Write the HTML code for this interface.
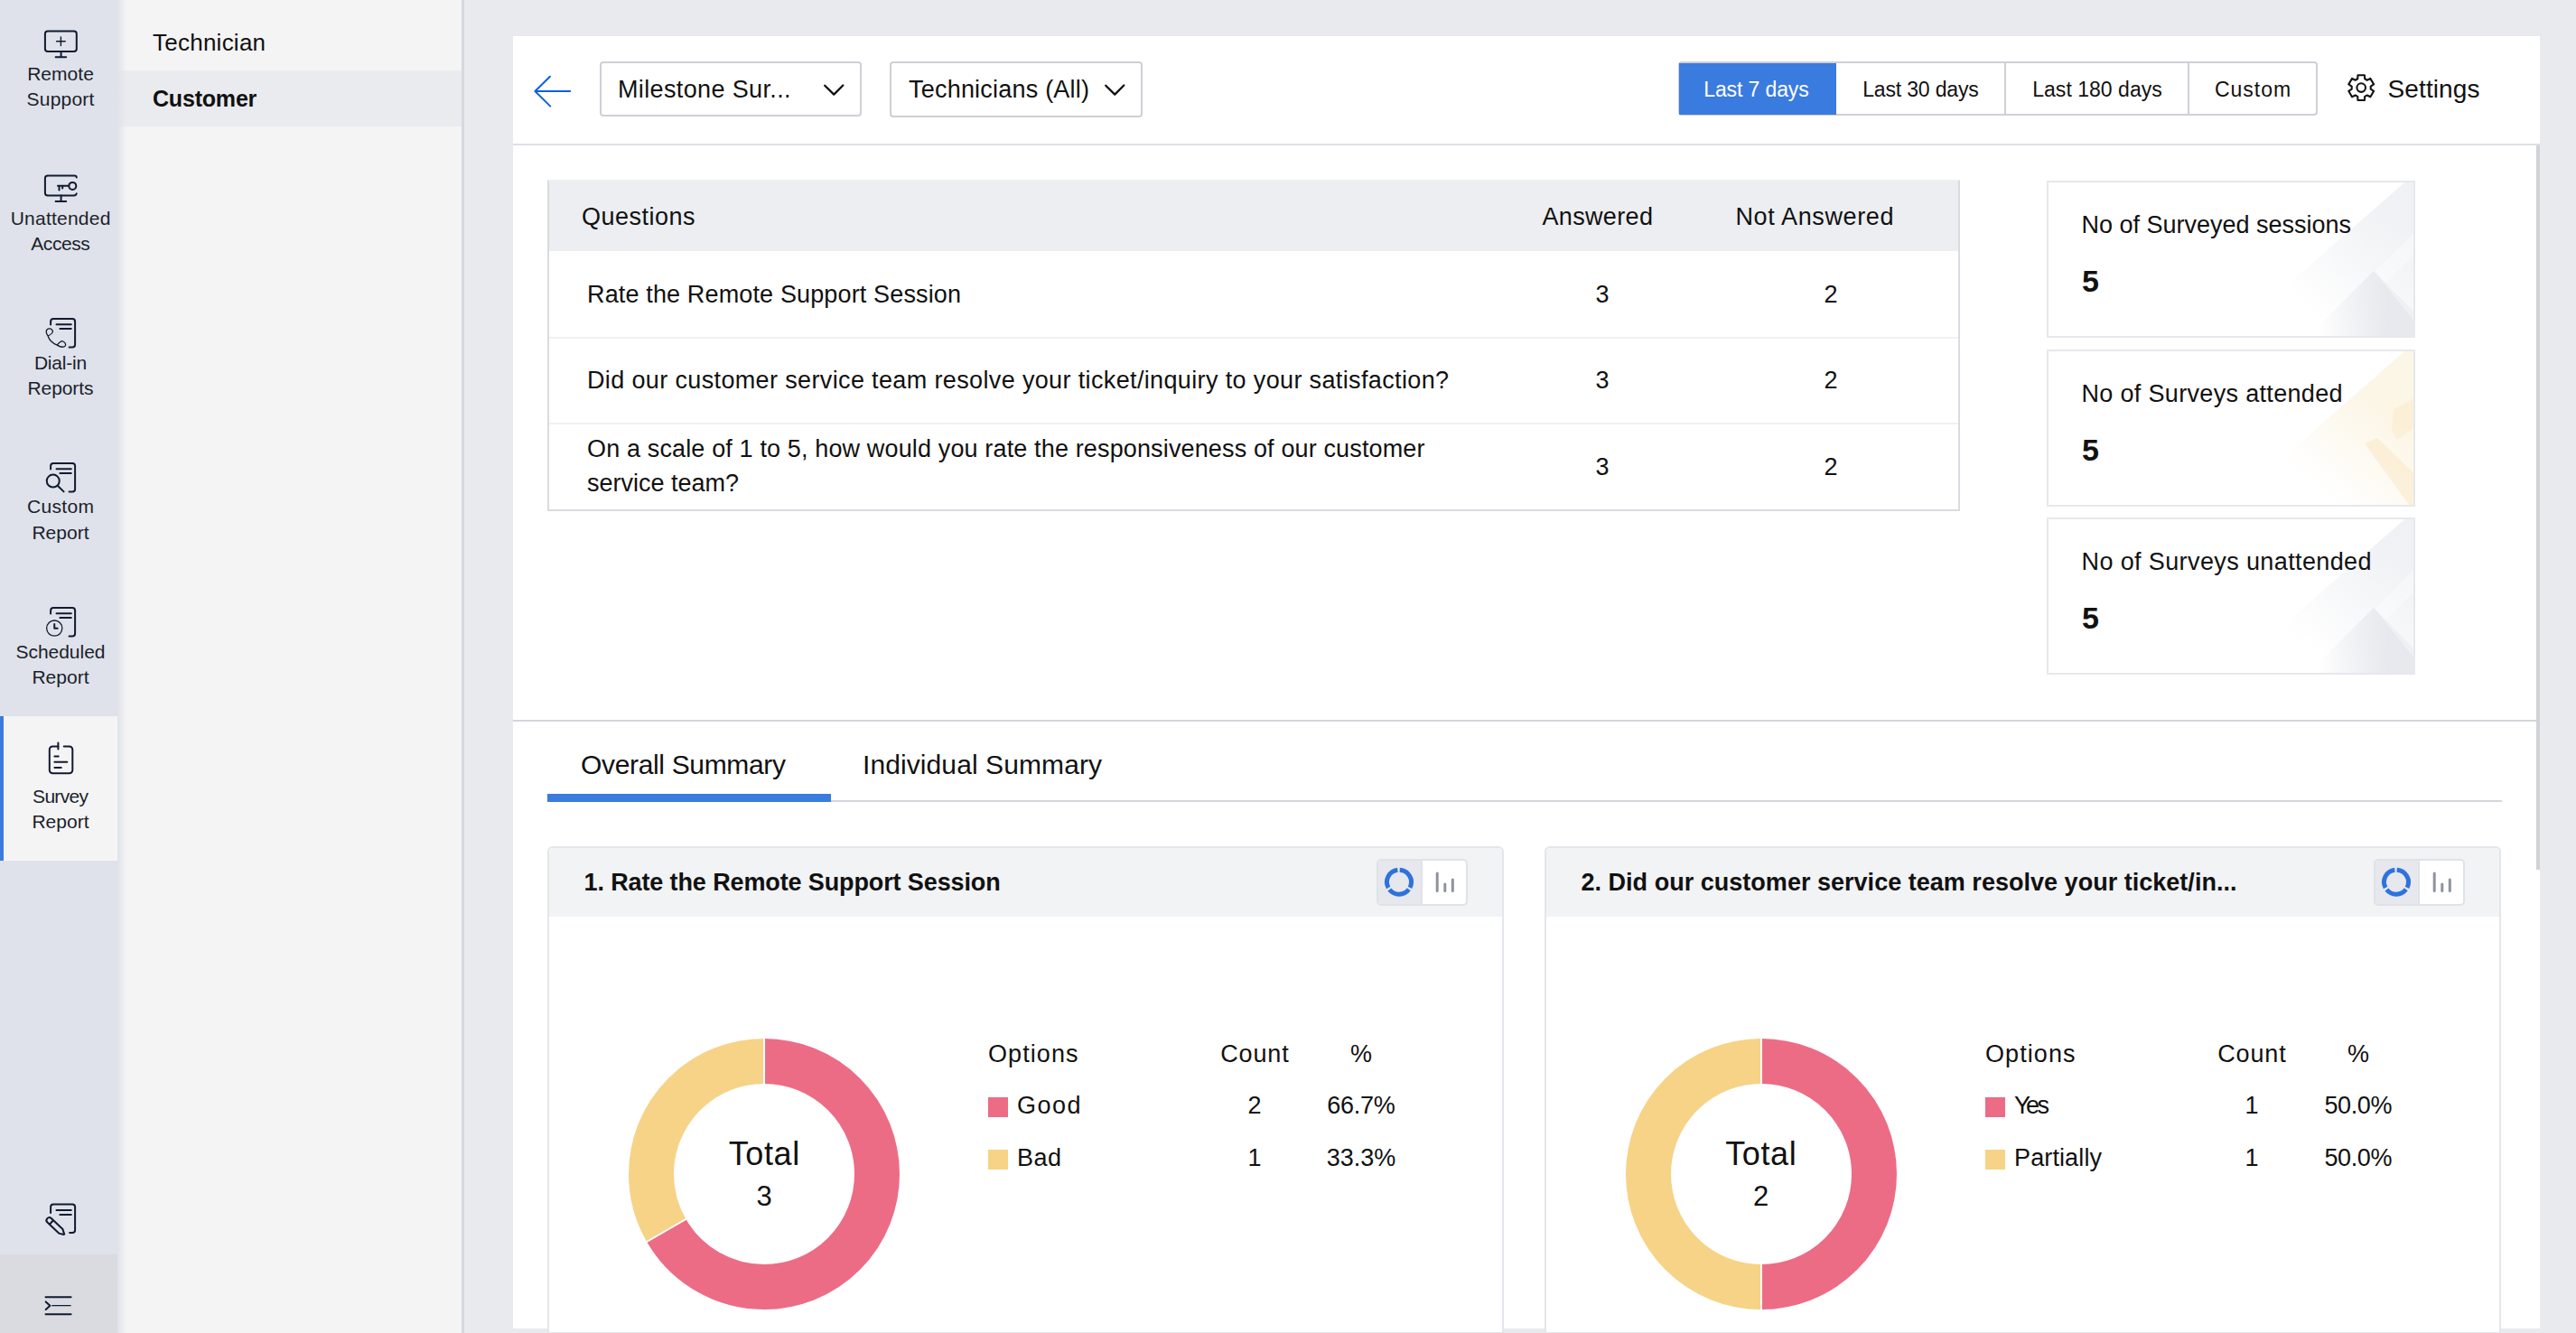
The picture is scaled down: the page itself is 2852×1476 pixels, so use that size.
<!DOCTYPE html>
<html><head><meta charset="utf-8"><style>
*{margin:0;padding:0;box-sizing:border-box}
html,body{width:2852px;height:1476px;overflow:hidden;background:#e8eaee;font-family:"Liberation Sans",sans-serif;color:#111}
.abs{position:absolute}
.t{position:absolute;white-space:nowrap}
svg{position:absolute;overflow:visible}
</style></head><body>
<div class="abs" style="left:0px;top:0px;width:130px;height:1476px;background:#dfe2ea"></div>
<div class="abs" style="left:0px;top:793px;width:130px;height:160px;background:#f4f4f5"></div>
<div class="abs" style="left:0px;top:793px;width:4px;height:160px;background:#3a7bdf"></div>
<div class="abs" style="left:0px;top:1389px;width:130px;height:87px;background:#d9dbe0"></div>
<svg style="left:40px;top:25px" width="60" height="50" viewBox="0 0 60 50" fill="none" stroke="#111a30" stroke-width="2" stroke-linecap="round" stroke-linejoin="round"><rect x="9.9" y="9.6" width="34.9" height="22.3" rx="3"/><path d="M27.4 16v9.6M22.6 20.8h9.6" stroke-width="1.4"/><path d="M27.6 31.9v6.3M21.6 38.2h11.6"/></svg>
<svg style="left:40px;top:180px" width="60" height="50" viewBox="0 0 60 50" fill="none" stroke="#111a30" stroke-width="2" stroke-linecap="round" stroke-linejoin="round"><path d="M44.8 16.5a2.2 2.2 0 0 0-2.2-2.1H12.9a3 3 0 0 0-3 3V33.4a3 3 0 0 0 3 3H41.8a3 3 0 0 0 3-2"/><circle cx="40.3" cy="25.9" r="4"/><path d="M24 25.7H36.3M25.5 25.7v4.9M29.2 25.7v2.8M27.6 36.4v6.7M21.6 43.1h11.6"/></svg>
<svg style="left:40px;top:345px" width="60" height="50" viewBox="0 0 60 50" fill="none" stroke="#111a30" stroke-width="2" stroke-linecap="round" stroke-linejoin="round"><path d="M16.1 14.6V11.1a3 3 0 0 1 3-3H40.1a3 3 0 0 1 3 3V36.4a3 3 0 0 1-3 3H36.6"/><path d="M22.5 14.2H38.8M26.4 18.9H38.8"/><path stroke-width="1.3" d="M13.1 27C11 24 10.8 21 12.5 19.5 14 18.3 17 18.5 18.4 21.5 18.8 23 16 25.5 13.1 27 14.5 31.5 18 35 23.2 37.1 25 35 27 33 28.5 32.6 31 33 33 35.5 32.6 37.5 31.5 39.8 28 40 23.2 37.1"/></svg>
<svg style="left:40px;top:505px" width="60" height="50" viewBox="0 0 60 50" fill="none" stroke="#111a30" stroke-width="2" stroke-linecap="round" stroke-linejoin="round"><path d="M16.1 14.6V11.1a3 3 0 0 1 3-3H40.1a3 3 0 0 1 3 3V36.4a3 3 0 0 1-3 3H36.6"/><path d="M22.5 14.2H38.8M26.4 18.9H38.8"/><circle cx="18.75" cy="27.6" r="7"/><path d="M24 33L30.6 39.4"/></svg>
<svg style="left:40px;top:665px" width="60" height="50" viewBox="0 0 60 50" fill="none" stroke="#111a30" stroke-width="2" stroke-linecap="round" stroke-linejoin="round"><path d="M16.1 14.6V11.1a3 3 0 0 1 3-3H40.1a3 3 0 0 1 3 3V36.4a3 3 0 0 1-3 3H36.6"/><path d="M22.5 14.2H38.8M26.4 18.9H38.8"/><circle cx="20.25" cy="30.6" r="8.6" stroke-width="1.3"/><path d="M20.25 25.9v4.8h3.4"/></svg>
<svg style="left:40px;top:815px" width="60" height="50" viewBox="0 0 60 50" fill="none" stroke="#111a30" stroke-width="2" stroke-linecap="round" stroke-linejoin="round"><path d="M24.4 11.4H18.3a3.5 3.5 0 0 0-3.5 3.5V37.75a3.5 3.5 0 0 0 3.5 3.5H36.8a3.5 3.5 0 0 0 3.5-3.5V14.9a3.5 3.5 0 0 0-3.5-3.5H30.75"/><path d="M24.4 7.5v7.1M20.4 22.5h4.35M20.4 28.7H34.3M20.4 35H27.75"/></svg>
<svg style="left:40px;top:1325px" width="60" height="50" viewBox="0 0 60 50" fill="none" stroke="#111a30" stroke-width="2" stroke-linecap="round" stroke-linejoin="round"><path d="M16.1 18V11.6a3 3 0 0 1 3-3H40.1a3 3 0 0 1 3 3V36.9a3 3 0 0 1-3 3H37.1"/><path d="M22.5 15H38.8M26.4 19.9H38.8"/><g transform="translate(14.6,26.3) rotate(43.5)"><path d="M0 -3.1H17.5L22.5 -0.4V0.4L17.5 3.1H0A3.1 3.1 0 0 1 0 -3.1zM3.2 -3.1V3.1"/></g></svg>
<svg style="left:40px;top:1420px" width="60" height="50" viewBox="0 0 60 50" fill="none" stroke="#111a30" stroke-width="2" stroke-linecap="round" stroke-linejoin="round"><path d="M10.5 16.3H38.6M10.5 35.25H38.6M10.7 21.4L15.4 25.7 10.7 30"/><path d="M17.8 25.7H38.1" stroke-width="1.2"/></svg>
<div class="t" style="left:-432.98515625px;width:1000px;text-align:center;top:71.22px;font-size:21px;line-height:21px;color:#1b1f2a;letter-spacing:0.030px;">Remote</div>
<div class="t" style="left:-432.89306640625px;width:1000px;text-align:center;top:99.22px;font-size:21px;line-height:21px;color:#1b1f2a;letter-spacing:0.214px;">Support</div>
<div class="t" style="left:-432.8838704427083px;width:1000px;text-align:center;top:230.72px;font-size:21px;line-height:21px;color:#1b1f2a;letter-spacing:0.232px;">Unattended</div>
<div class="t" style="left:-433.218603515625px;width:1000px;text-align:center;top:259.22px;font-size:21px;line-height:21px;color:#1b1f2a;letter-spacing:-0.437px;">Access</div>
<div class="t" style="left:-433.1112060546875px;width:1000px;text-align:center;top:390.92px;font-size:21px;line-height:21px;color:#1b1f2a;letter-spacing:-0.222px;">Dial-in</div>
<div class="t" style="left:-433.0358968098958px;width:1000px;text-align:center;top:419.02px;font-size:21px;line-height:21px;color:#1b1f2a;letter-spacing:-0.072px;">Reports</div>
<div class="t" style="left:-432.84583984375px;width:1000px;text-align:center;top:550.22px;font-size:21px;line-height:21px;color:#1b1f2a;letter-spacing:0.308px;">Custom</div>
<div class="t" style="left:-432.98962890625px;width:1000px;text-align:center;top:579.22px;font-size:21px;line-height:21px;color:#1b1f2a;letter-spacing:0.021px;">Report</div>
<div class="t" style="left:-433.0167724609375px;width:1000px;text-align:center;top:710.72px;font-size:21px;line-height:21px;color:#1b1f2a;letter-spacing:-0.034px;">Scheduled</div>
<div class="t" style="left:-432.98962890625px;width:1000px;text-align:center;top:739.22px;font-size:21px;line-height:21px;color:#1b1f2a;letter-spacing:0.021px;">Report</div>
<div class="t" style="left:-433.35583984375px;width:1000px;text-align:center;top:870.92px;font-size:21px;line-height:21px;color:#1b1f2a;letter-spacing:-0.712px;">Survey</div>
<div class="t" style="left:-432.98962890625px;width:1000px;text-align:center;top:899.02px;font-size:21px;line-height:21px;color:#1b1f2a;letter-spacing:0.021px;">Report</div>
<div class="abs" style="left:130px;top:0px;width:381px;height:1476px;background:#f4f4f5"></div>
<div class="abs" style="left:130px;top:78px;width:381px;height:62px;background:#e9ebef"></div>
<div class="abs" style="left:130px;top:0px;width:10px;height:1476px;background:linear-gradient(90deg,#dfe2e9,rgba(244,244,245,0))"></div>
<div class="abs" style="left:511px;top:0px;width:3px;height:1476px;background:#d5d8de"></div>
<div class="t" style="left:169px;top:33.79px;font-size:26px;line-height:26px;color:#111;letter-spacing:0.245px;">Technician</div>
<div class="t" style="left:169px;top:96.64px;font-size:25px;line-height:25px;color:#111;font-weight:bold;letter-spacing:-0.194px;">Customer</div>
<div class="abs" style="left:568px;top:40px;width:2244px;height:1431px;background:#fff"></div>
<div class="abs" style="left:568px;top:159px;width:2244px;height:2px;background:#dcdfe5"></div>
<div class="abs" style="left:2808px;top:161px;width:4px;height:802px;background:#d0d2d6"></div>
<svg style="left:580px;top:75px" width="60" height="50" viewBox="0 0 60 50" fill="none" stroke="#0e5fe0" stroke-width="2" stroke-linecap="round" stroke-linejoin="round">
<path d="M28.9 9.75L12.4 26 29.25 42.6M12.4 26H51.2"/></svg><div class="abs" style="left:664px;top:68px;width:290px;height:61px;border:2px solid #cdd0d6;border-radius:4px;background:#fff"></div>
<div class="t" style="left:684px;top:86.14px;font-size:27px;line-height:27px;color:#111;letter-spacing:0.361px;">Milestone Sur...</div>
<svg style="left:900px;top:80px" width="50" height="40" viewBox="0 0 50 40" fill="none" stroke="#111" stroke-width="2.3" stroke-linecap="round" stroke-linejoin="round"><path d="M13.2 14.7L23.25 24.6 33.3 14.5"/></svg>
<div class="abs" style="left:985px;top:68px;width:280px;height:62px;border:2px solid #cdd0d6;border-radius:4px;background:#fff"></div>
<div class="t" style="left:1006px;top:86.14px;font-size:27px;line-height:27px;color:#111;letter-spacing:0.214px;">Technicians (All)</div>
<svg style="left:1210.5px;top:80px" width="50" height="40" viewBox="0 0 50 40" fill="none" stroke="#111" stroke-width="2.3" stroke-linecap="round" stroke-linejoin="round"><path d="M13.2 14.7L23.25 24.6 33.3 14.5"/></svg>
<div class="abs" style="left:1858px;top:68px;width:708px;height:60px;border:2px solid #cdd0d6;border-radius:4px;background:#fff"></div>
<div class="abs" style="left:1859px;top:70px;width:174px;height:57px;background:#3a7bdf"></div>
<div class="abs" style="left:2219px;top:70px;width:2px;height:57px;background:#cdd0d6"></div>
<div class="abs" style="left:2422px;top:70px;width:2px;height:57px;background:#cdd0d6"></div>
<div class="t" style="left:1444.443603515625px;width:1000px;text-align:center;top:87.53px;font-size:23px;line-height:23px;color:#fff;letter-spacing:-0.113px;">Last 7 days</div>
<div class="t" style="left:1626.412753018466px;width:1000px;text-align:center;top:87.53px;font-size:23px;line-height:23px;color:#111;letter-spacing:-0.174px;">Last 30 days</div>
<div class="t" style="left:1822.0120442708335px;width:1000px;text-align:center;top:87.53px;font-size:23px;line-height:23px;color:#111;letter-spacing:0.024px;">Last 180 days</div>
<div class="t" style="left:1994.49169921875px;width:1000px;text-align:center;top:87.53px;font-size:23px;line-height:23px;color:#111;letter-spacing:0.983px;">Custom</div>
<svg style="left:2599px;top:82px" width="31" height="31" viewBox="0 0 31 31" fill="none" stroke="#111" stroke-width="2.1" stroke-linejoin="round">
<polygon points="11.23,5.27 11.47,1.19 18.93,1.19 19.17,5.27 21.73,6.75 25.38,4.92 29.11,11.37 25.70,13.62 25.70,16.58 29.11,18.83 25.38,25.28 21.73,23.45 19.17,24.93 18.93,29.01 11.47,29.01 11.23,24.93 8.67,23.45 5.02,25.28 1.29,18.83 4.70,16.58 4.70,13.62 1.29,11.37 5.02,4.92 8.67,6.75"/><circle cx="15.2" cy="15.1" r="4.8"/></svg><div class="t" style="left:2643.5px;top:85.30px;font-size:28px;line-height:28px;color:#111;letter-spacing:0.118px;">Settings</div>
<div class="abs" style="left:606px;top:199px;width:1564px;height:367px;border:2px solid #d8dbe0;border-top-color:#eef0f3;background:#fff"></div>
<div class="abs" style="left:608px;top:201px;width:1560px;height:77px;background:#eceef1"></div>
<div class="abs" style="left:608px;top:372.5px;width:1560px;height:2px;background:#f0f1f2"></div>
<div class="abs" style="left:608px;top:467.5px;width:1560px;height:2px;background:#f0f1f2"></div>
<div class="t" style="left:644px;top:226.64px;font-size:27px;line-height:27px;color:#111;letter-spacing:0.492px;">Questions</div>
<div class="t" style="left:1268.8752232142858px;width:1000px;text-align:center;top:226.64px;font-size:27px;line-height:27px;color:#111;letter-spacing:0.350px;">Answered</div>
<div class="t" style="left:1509.3152521306818px;width:1000px;text-align:center;top:226.64px;font-size:27px;line-height:27px;color:#111;letter-spacing:0.631px;">Not Answered</div>
<div class="t" style="left:650px;top:313.14px;font-size:27px;line-height:27px;color:#111;letter-spacing:0.143px;">Rate the Remote Support Session</div>
<div class="t" style="left:1274px;width:1000px;text-align:center;top:313.14px;font-size:27px;line-height:27px;color:#111;">3</div>
<div class="t" style="left:1527px;width:1000px;text-align:center;top:313.14px;font-size:27px;line-height:27px;color:#111;">2</div>
<div class="t" style="left:650px;top:408.14px;font-size:27px;line-height:27px;color:#111;letter-spacing:0.361px;">Did our customer service team resolve your ticket/inquiry to your satisfaction?</div>
<div class="t" style="left:1274px;width:1000px;text-align:center;top:408.14px;font-size:27px;line-height:27px;color:#111;">3</div>
<div class="t" style="left:1527px;width:1000px;text-align:center;top:408.14px;font-size:27px;line-height:27px;color:#111;">2</div>
<div class="t" style="left:650px;top:484.14px;font-size:27px;line-height:27px;color:#111;letter-spacing:0.142px;">On a scale of 1 to 5, how would you rate the responsiveness of our customer</div>
<div class="t" style="left:650px;top:521.74px;font-size:27px;line-height:27px;color:#111;letter-spacing:-0.004px;">service team?</div>
<div class="t" style="left:1274px;width:1000px;text-align:center;top:504.14px;font-size:27px;line-height:27px;color:#111;">3</div>
<div class="t" style="left:1527px;width:1000px;text-align:center;top:504.14px;font-size:27px;line-height:27px;color:#111;">2</div>
<div class="abs" style="left:2266px;top:200px;width:408px;height:174px;border:2px solid #e6e8ec;background:#fff;overflow:hidden"><svg style="left:-2px;top:-2px" width="408" height="174" viewBox="0 0 408 174">
<defs><linearGradient id="fg0" x1="0" y1="1" x2="1" y2="0" gradientUnits="objectBoundingBox"><stop offset="0.3" stop-color="#eef0f3" stop-opacity="0"/><stop offset="0.8" stop-color="#eef0f3" stop-opacity="0.9"/></linearGradient>
<linearGradient id="ag0" x1="0" y1="0.5" x2="1" y2="0.5"><stop offset="0.1" stop-color="#e5e7ec" stop-opacity="0"/><stop offset="0.6" stop-color="#e5e7ec" stop-opacity="0.9"/></linearGradient></defs>
<polygon points="200,174 403,-4 420,-4 420,180 200,180" fill="url(#fg0)"/>
<polygon points="362,100 440,178 362,256 284,178" fill="url(#ag0)"/>
<polygon points="363,101 465,-1 490,-1 376,113 460,197 440,197" fill="#ffffff" opacity="0.35"/>
</svg></div>
<div class="t" style="left:2304.5px;top:235.64px;font-size:27px;line-height:27px;color:#111;letter-spacing:-0.007px;">No of Surveyed sessions</div>
<div class="t" style="left:2305px;top:294.02px;font-size:34px;line-height:34px;color:#111;font-weight:bold;">5</div>
<div class="abs" style="left:2266px;top:387px;width:408px;height:174px;border:2px solid #e6e8ec;background:#fff;overflow:hidden"><svg style="left:-2px;top:-2px" width="408" height="174" viewBox="0 0 408 174">
<defs><linearGradient id="fg1" x1="0" y1="1" x2="1" y2="0"><stop offset="0.3" stop-color="#fcf6e6" stop-opacity="0"/><stop offset="0.7" stop-color="#fcf6e6" stop-opacity="1"/></linearGradient></defs>
<polygon points="200,174 403,-4 420,-4 420,180 200,180" fill="url(#fg1)"/>
<polygon points="352,104 366,98 420,150 420,176 404,176" fill="#f8e2b6" opacity="0.4"/>
<polygon points="384,66 410,52 410,84 388,100 382,90" fill="#f8e2b6" opacity="0.3"/>
</svg></div>
<div class="t" style="left:2304.5px;top:422.64px;font-size:27px;line-height:27px;color:#111;letter-spacing:0.326px;">No of Surveys attended</div>
<div class="t" style="left:2305px;top:481.02px;font-size:34px;line-height:34px;color:#111;font-weight:bold;">5</div>
<div class="abs" style="left:2266px;top:573px;width:408px;height:174px;border:2px solid #e6e8ec;background:#fff;overflow:hidden"><svg style="left:-2px;top:-2px" width="408" height="174" viewBox="0 0 408 174">
<defs><linearGradient id="fg2" x1="0" y1="1" x2="1" y2="0" gradientUnits="objectBoundingBox"><stop offset="0.3" stop-color="#eef0f3" stop-opacity="0"/><stop offset="0.8" stop-color="#eef0f3" stop-opacity="0.9"/></linearGradient>
<linearGradient id="ag2" x1="0" y1="0.5" x2="1" y2="0.5"><stop offset="0.1" stop-color="#e5e7ec" stop-opacity="0"/><stop offset="0.6" stop-color="#e5e7ec" stop-opacity="0.9"/></linearGradient></defs>
<polygon points="200,174 403,-4 420,-4 420,180 200,180" fill="url(#fg2)"/>
<polygon points="362,100 440,178 362,256 284,178" fill="url(#ag2)"/>
<polygon points="363,101 465,-1 490,-1 376,113 460,197 440,197" fill="#ffffff" opacity="0.35"/>
</svg></div>
<div class="t" style="left:2304.5px;top:608.64px;font-size:27px;line-height:27px;color:#111;letter-spacing:0.383px;">No of Surveys unattended</div>
<div class="t" style="left:2305px;top:667.02px;font-size:34px;line-height:34px;color:#111;font-weight:bold;">5</div>
<div class="abs" style="left:568px;top:797px;width:2240px;height:2px;background:#d3d6db"></div>
<div class="t" style="left:643px;top:832.00px;font-size:30px;line-height:30px;color:#111;letter-spacing:-0.336px;">Overall Summary</div>
<div class="t" style="left:955px;top:832.00px;font-size:30px;line-height:30px;color:#111;letter-spacing:0.092px;">Individual Summary</div>
<div class="abs" style="left:606px;top:886px;width:2164px;height:2px;background:#d4d6db"></div>
<div class="abs" style="left:606px;top:879px;width:314px;height:9px;background:#3a7bdf"></div>
<div class="abs" style="left:606px;top:937px;width:1059px;height:540px;border:2px solid #e4e6eb;border-radius:6px 6px 0 0;background:#fff"></div>
<div class="abs" style="left:608px;top:939px;width:1055px;height:76px;background:#f2f3f5;border-radius:5px 5px 0 0"></div>
<div class="t" style="left:646.5px;top:964.14px;font-size:27px;line-height:27px;color:#111;font-weight:bold;letter-spacing:-0.118px;">1. Rate the Remote Support Session</div>
<div class="abs" style="left:1524px;top:951px;width:101px;height:52px;border:2px solid #dfe2e7;border-radius:5px;background:#fff"></div>
<div class="abs" style="left:1526px;top:953px;width:48px;height:48px;background:#e6e8ed;border-radius:3px 0 0 3px"></div>
<div class="abs" style="left:1573px;top:953px;width:2px;height:48px;background:#dfe2e7"></div>
<svg style="left:1524px;top:951px" width="101" height="52" viewBox="0 0 101 52" fill="none">
<g stroke="#2f72dc" stroke-width="5"><path d="M25.71 12.22A13.5 13.5 0 0 1 37.03 31.83"/><path d="M35.78 33.82A13.5 13.5 0 0 1 14.36 34.01"/><path d="M13.08 32.04A13.5 13.5 0 0 1 23.35 12.30"/></g><g stroke="#8e939c" stroke-width="3" stroke-linecap="round"><path d="M67.2 16v19.5M75.8 28v7.5M84.3 23v12.5"/></g></svg><svg style="left:696px;top:1150px" width="300" height="300" viewBox="0 0 300 300"><circle cx="150" cy="150" r="125" fill="none" stroke="#ec6c86" stroke-width="50" stroke-dasharray="523.599 261.799" stroke-dashoffset="0.000" transform="rotate(-90 150 150)"/><circle cx="150" cy="150" r="125" fill="none" stroke="#f6d386" stroke-width="50" stroke-dasharray="261.799 523.599" stroke-dashoffset="-523.599" transform="rotate(-90 150 150)"/><line x1="150.00" y1="52.00" x2="150.00" y2="-2.00" stroke="#fff" stroke-width="2"/><line x1="65.13" y1="199.00" x2="18.36" y2="226.00" stroke="#fff" stroke-width="2"/></svg>
<div class="t" style="left:346.306884765625px;width:1000px;text-align:center;top:1259.53px;font-size:36px;line-height:36px;color:#111;letter-spacing:0.614px;">Total</div>
<div class="t" style="left:346px;width:1000px;text-align:center;top:1309.36px;font-size:31px;line-height:31px;color:#111;">3</div>
<div class="t" style="left:1094px;top:1153.84px;font-size:27px;line-height:27px;color:#111;letter-spacing:1.075px;">Options</div>
<div class="t" style="left:889.431640625px;width:1000px;text-align:center;top:1153.84px;font-size:27px;line-height:27px;color:#111;letter-spacing:0.863px;">Count</div>
<div class="t" style="left:1007px;width:1000px;text-align:center;top:1153.84px;font-size:27px;line-height:27px;color:#111;">%</div>
<div class="abs" style="left:1094px;top:1215.0px;width:22px;height:22px;background:#ec6c86"></div>
<div class="t" style="left:1126px;top:1211.44px;font-size:27px;line-height:27px;color:#111;letter-spacing:1.489px;">Good</div>
<div class="t" style="left:889px;width:1000px;text-align:center;top:1211.44px;font-size:27px;line-height:27px;color:#111;">2</div>
<div class="t" style="left:1006.8687744140625px;width:1000px;text-align:center;top:1211.44px;font-size:27px;line-height:27px;color:#111;letter-spacing:-0.262px;">66.7%</div>
<div class="abs" style="left:1094px;top:1272.5px;width:22px;height:22px;background:#f6d386"></div>
<div class="t" style="left:1126px;top:1268.74px;font-size:27px;line-height:27px;color:#111;letter-spacing:0.488px;">Bad</div>
<div class="t" style="left:889px;width:1000px;text-align:center;top:1268.74px;font-size:27px;line-height:27px;color:#111;">1</div>
<div class="t" style="left:1007px;width:1000px;text-align:center;top:1268.74px;font-size:27px;line-height:27px;color:#111;">33.3%</div>
<div class="abs" style="left:1710px;top:937px;width:1059px;height:540px;border:2px solid #e4e6eb;border-radius:6px 6px 0 0;background:#fff"></div>
<div class="abs" style="left:1712px;top:939px;width:1055px;height:76px;background:#f2f3f5;border-radius:5px 5px 0 0"></div>
<div class="t" style="left:1750.5px;top:964.14px;font-size:27px;line-height:27px;color:#111;font-weight:bold;letter-spacing:0.021px;">2. Did our customer service team resolve your ticket/in...</div>
<div class="abs" style="left:2628px;top:951px;width:101px;height:52px;border:2px solid #dfe2e7;border-radius:5px;background:#fff"></div>
<div class="abs" style="left:2630px;top:953px;width:48px;height:48px;background:#e6e8ed;border-radius:3px 0 0 3px"></div>
<div class="abs" style="left:2677px;top:953px;width:2px;height:48px;background:#dfe2e7"></div>
<svg style="left:2628px;top:951px" width="101" height="52" viewBox="0 0 101 52" fill="none">
<g stroke="#2f72dc" stroke-width="5"><path d="M25.71 12.22A13.5 13.5 0 0 1 37.03 31.83"/><path d="M35.78 33.82A13.5 13.5 0 0 1 14.36 34.01"/><path d="M13.08 32.04A13.5 13.5 0 0 1 23.35 12.30"/></g><g stroke="#8e939c" stroke-width="3" stroke-linecap="round"><path d="M67.2 16v19.5M75.8 28v7.5M84.3 23v12.5"/></g></svg><svg style="left:1799.5px;top:1150px" width="300" height="300" viewBox="0 0 300 300"><circle cx="150" cy="150" r="125" fill="none" stroke="#ec6c86" stroke-width="50" stroke-dasharray="392.699 392.699" stroke-dashoffset="0.000" transform="rotate(-90 150 150)"/><circle cx="150" cy="150" r="125" fill="none" stroke="#f6d386" stroke-width="50" stroke-dasharray="392.699 392.699" stroke-dashoffset="-392.699" transform="rotate(-90 150 150)"/><line x1="150.00" y1="52.00" x2="150.00" y2="-2.00" stroke="#fff" stroke-width="2"/><line x1="150.00" y1="248.00" x2="150.00" y2="302.00" stroke="#fff" stroke-width="2"/></svg>
<div class="t" style="left:1449.806884765625px;width:1000px;text-align:center;top:1259.53px;font-size:36px;line-height:36px;color:#111;letter-spacing:0.614px;">Total</div>
<div class="t" style="left:1449.5px;width:1000px;text-align:center;top:1309.36px;font-size:31px;line-height:31px;color:#111;">2</div>
<div class="t" style="left:2198px;top:1153.84px;font-size:27px;line-height:27px;color:#111;letter-spacing:1.075px;">Options</div>
<div class="t" style="left:1993.431640625px;width:1000px;text-align:center;top:1153.84px;font-size:27px;line-height:27px;color:#111;letter-spacing:0.863px;">Count</div>
<div class="t" style="left:2111px;width:1000px;text-align:center;top:1153.84px;font-size:27px;line-height:27px;color:#111;">%</div>
<div class="abs" style="left:2198px;top:1215.0px;width:22px;height:22px;background:#ec6c86"></div>
<div class="t" style="left:2230px;top:1211.44px;font-size:27px;line-height:27px;color:#111;letter-spacing:-2.523px;">Yes</div>
<div class="t" style="left:1993px;width:1000px;text-align:center;top:1211.44px;font-size:27px;line-height:27px;color:#111;">1</div>
<div class="t" style="left:2110.8062744140625px;width:1000px;text-align:center;top:1211.44px;font-size:27px;line-height:27px;color:#111;letter-spacing:-0.387px;">50.0%</div>
<div class="abs" style="left:2198px;top:1272.5px;width:22px;height:22px;background:#f6d386"></div>
<div class="t" style="left:2230px;top:1268.74px;font-size:27px;line-height:27px;color:#111;letter-spacing:0.121px;">Partially</div>
<div class="t" style="left:1993px;width:1000px;text-align:center;top:1268.74px;font-size:27px;line-height:27px;color:#111;">1</div>
<div class="t" style="left:2110.8062744140625px;width:1000px;text-align:center;top:1268.74px;font-size:27px;line-height:27px;color:#111;letter-spacing:-0.387px;">50.0%</div>
</body></html>
